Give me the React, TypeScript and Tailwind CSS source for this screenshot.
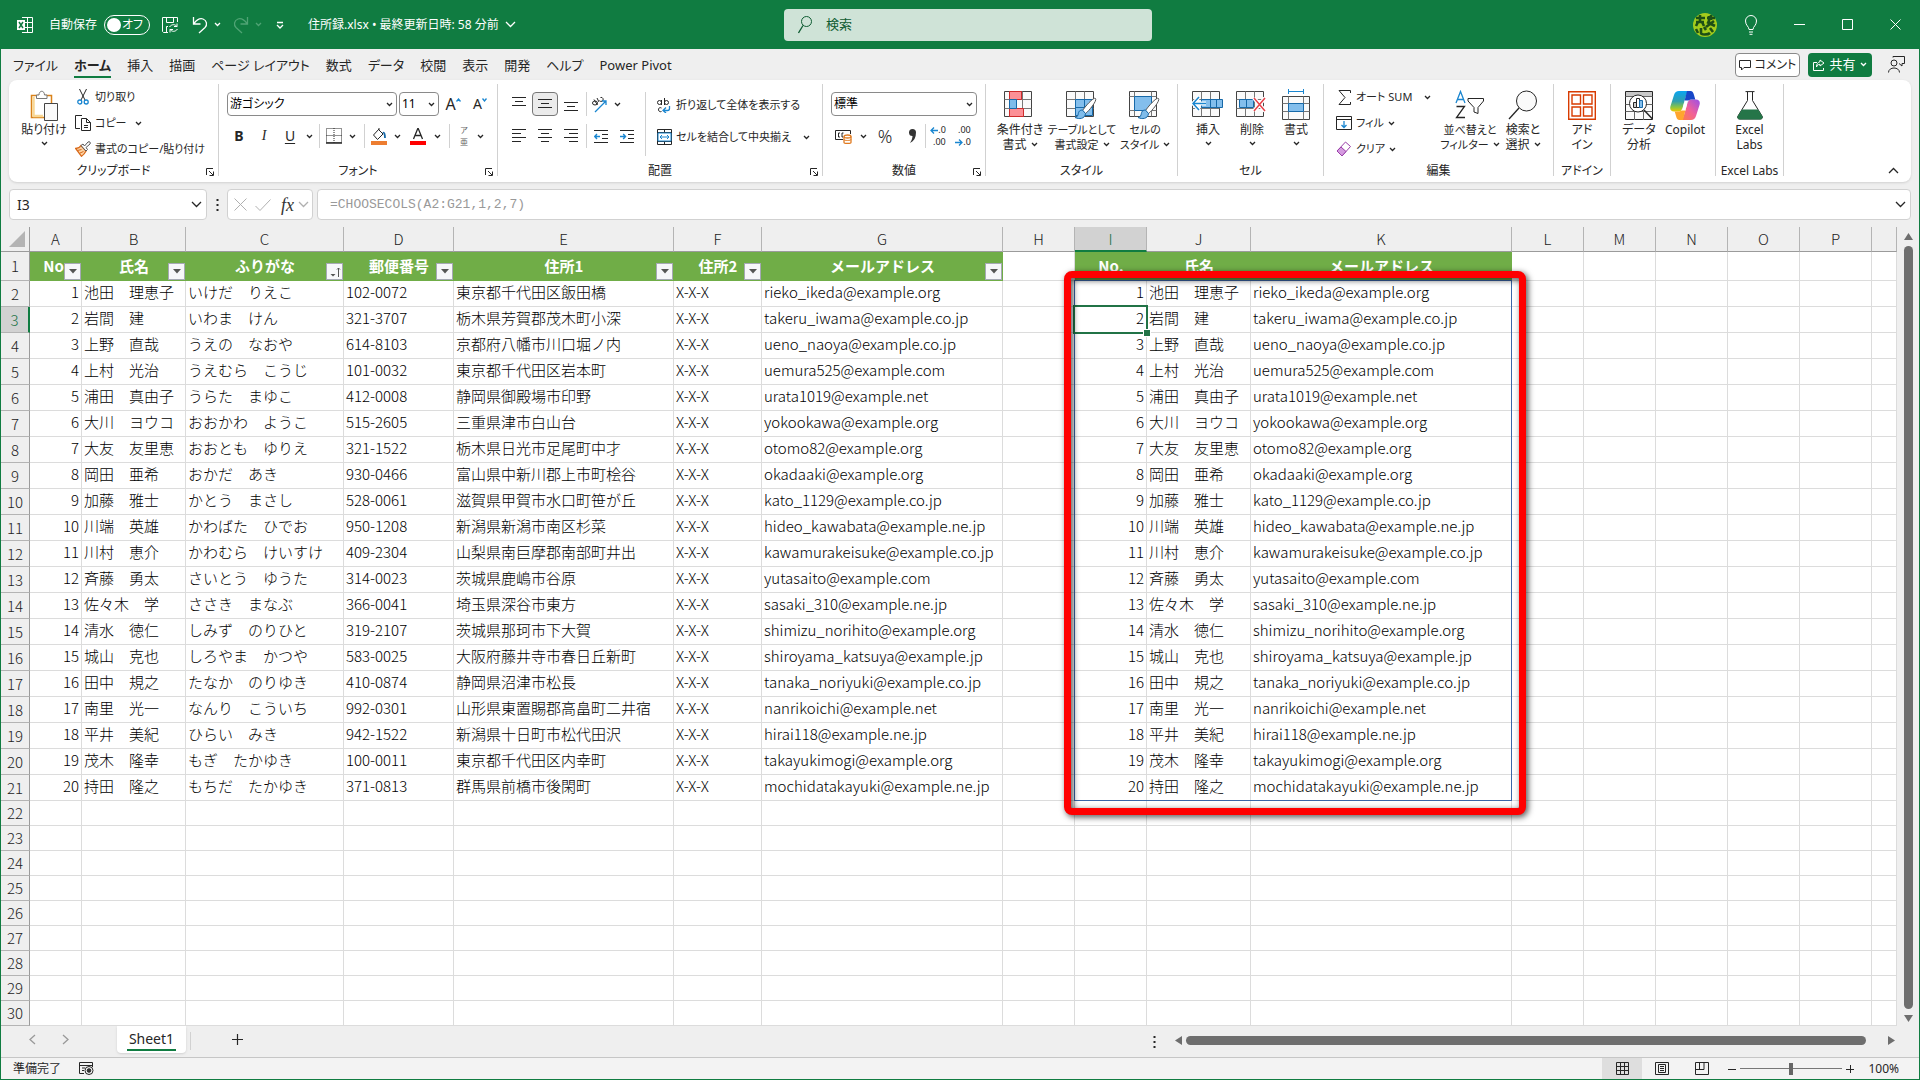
import { ReactNode } from "react";
import { clsx } from "clsx";

type Person = [string, string, string, string, string];

const people: Person[] = [
  ["池田　理恵子", "いけだ　りえこ", "102-0072", "東京都千代田区飯田橋", "rieko_ikeda@example.org"],
  ["岩間　建", "いわま　けん", "321-3707", "栃木県芳賀郡茂木町小深", "takeru_iwama@example.co.jp"],
  ["上野　直哉", "うえの　なおや", "614-8103", "京都府八幡市川口堀ノ内", "ueno_naoya@example.co.jp"],
  ["上村　光治", "うえむら　こうじ", "101-0032", "東京都千代田区岩本町", "uemura525@example.com"],
  ["浦田　真由子", "うらた　まゆこ", "412-0008", "静岡県御殿場市印野", "urata1019@example.net"],
  ["大川　ヨウコ", "おおかわ　ようこ", "515-2605", "三重県津市白山台", "yokookawa@example.org"],
  ["大友　友里恵", "おおとも　ゆりえ", "321-1522", "栃木県日光市足尾町中才", "otomo82@example.org"],
  ["岡田　亜希", "おかだ　あき", "930-0466", "富山県中新川郡上市町桧谷", "okadaaki@example.org"],
  ["加藤　雅士", "かとう　まさし", "528-0061", "滋賀県甲賀市水口町笹が丘", "kato_1129@example.co.jp"],
  ["川端　英雄", "かわばた　ひでお", "950-1208", "新潟県新潟市南区杉菜", "hideo_kawabata@example.ne.jp"],
  ["川村　恵介", "かわむら　けいすけ", "409-2304", "山梨県南巨摩郡南部町井出", "kawamurakeisuke@example.co.jp"],
  ["斉藤　勇太", "さいとう　ゆうた", "314-0023", "茨城県鹿嶋市谷原", "yutasaito@example.com"],
  ["佐々木　学", "ささき　まなぶ", "366-0041", "埼玉県深谷市東方", "sasaki_310@example.ne.jp"],
  ["清水　徳仁", "しみず　のりひと", "319-2107", "茨城県那珂市下大賀", "shimizu_norihito@example.org"],
  ["城山　克也", "しろやま　かつや", "583-0025", "大阪府藤井寺市春日丘新町", "shiroyama_katsuya@example.jp"],
  ["田中　規之", "たなか　のりゆき", "410-0874", "静岡県沼津市松長", "tanaka_noriyuki@example.co.jp"],
  ["南里　光一", "なんり　こういち", "992-0301", "山形県東置賜郡高畠町二井宿", "nanrikoichi@example.net"],
  ["平井　美紀", "ひらい　みき", "942-1522", "新潟県十日町市松代田沢", "hirai118@example.ne.jp"],
  ["茂木　隆幸", "もぎ　たかゆき", "100-0011", "東京都千代田区内幸町", "takayukimogi@example.org"],
  ["持田　隆之", "もちだ　たかゆき", "371-0813", "群馬県前橋市後閑町", "mochidatakayuki@example.ne.jp"],
];

const columns = [
  { id: "A", width: "w-[52px]", title: "No." },
  { id: "B", width: "w-[104px]", title: "氏名" },
  { id: "C", width: "w-[158px]", title: "ふりがな" },
  { id: "D", width: "w-[110px]", title: "郵便番号" },
  { id: "E", width: "w-[220px]", title: "住所1" },
  { id: "F", width: "w-[88px]", title: "住所2" },
  { id: "G", width: "w-[241px]", title: "メールアドレス" },
  { id: "H", width: "w-[72px]" },
  { id: "I", width: "w-[72px]", title: "No." },
  { id: "J", width: "w-[104px]", title: "氏名" },
  { id: "K", width: "w-[261px]", title: "メールアドレス" },
  { id: "L", width: "w-[72px]" },
  { id: "M", width: "w-[72px]" },
  { id: "N", width: "w-[72px]" },
  { id: "O", width: "w-[72px]" },
  { id: "P", width: "w-[72px]" },
  { id: "", width: "w-auto" },
];

const tabs = [
  "ファイル",
  "ホーム",
  "挿入",
  "描画",
  "ページ レイアウト",
  "数式",
  "データ",
  "校閲",
  "表示",
  "開発",
  "ヘルプ",
  "Power Pivot",
];

function Svg({
  w,
  h,
  children,
  className,
}: {
  w: number;
  h: number;
  children: ReactNode;
  className?: string;
}) {
  return (
    <svg
      width={w}
      height={h}
      viewBox={`0 0 ${w} ${h}`}
      fill="none"
      stroke="currentColor"
      className={clsx("shrink-0", className)}
      aria-hidden="true"
    >
      {children}
    </svg>
  );
}

function Chevron({ className }: { className?: string }) {
  return (
    <Svg w={7} h={5} className={className}>
      <path d="M1 1l2.5 2.5L6 1" strokeWidth="1.3" />
    </Svg>
  );
}

function BigChevron({ className }: { className?: string }) {
  return (
    <Svg w={11} h={7} className={className}>
      <path d="M1 1l4.5 4.5L10 1" strokeWidth="1.3" />
    </Svg>
  );
}

/* ---------- Ribbon building blocks ---------- */

function Group({
  label,
  width,
  launcher,
  children,
}: {
  label?: string;
  width: string;
  launcher?: boolean;
  children: ReactNode;
}) {
  return (
    <section
      className={clsx(
        "relative flex shrink-0 flex-col border-r border-[#d1d1d1]",
        width
      )}
    >
      <div className="flex h-[79px] shrink-0 items-start">{children}</div>
      <div className="text-center leading-4 whitespace-nowrap">{label}</div>
      {launcher && (
        <button
          aria-label={`${label}の設定`}
          className="absolute right-1 bottom-0"
        >
          <Svg w={8} h={8}>
            <path d="M7 .5H.5V7M3 3l4 4M7.5 3.5v4h-4" />
          </Svg>
        </button>
      )}
    </section>
  );
}

function Divider({ className }: { className?: string }) {
  return <span className={clsx("h-6 w-px shrink-0 bg-[#d1d1d1]", className)} />;
}

function Tool({
  label,
  width = "w-[26px]",
  active,
  children,
}: {
  label: string;
  width?: string;
  active?: boolean;
  children?: ReactNode;
}) {
  return (
    <button
      aria-label={label}
      className={clsx(
        "flex h-6 shrink-0 items-center justify-center rounded",
        width,
        active && "border border-[#777] bg-[#ebebeb]"
      )}
    >
      {children ?? <Chevron />}
    </button>
  );
}

function BigButton({
  icon,
  lines,
  width,
  menu,
}: {
  icon: ReactNode;
  lines: string[];
  width: string;
  menu?: "inline" | "below";
}) {
  return (
    <button
      className={clsx(
        "flex shrink-0 flex-col items-center leading-[15px] whitespace-nowrap",
        width
      )}
    >
      <span className="mt-1 flex h-[34px] items-center">{icon}</span>
      {lines.map((line, i) => (
        <span key={line} className="flex items-center gap-1">
          {line}
          {menu === "inline" && i === lines.length - 1 && <Chevron />}
        </span>
      ))}
      {menu === "below" && <Chevron className="mt-1" />}
    </button>
  );
}

function SmallButton({
  icon,
  text,
  menu,
}: {
  icon: ReactNode;
  text: string;
  menu?: string;
}) {
  return (
    <button className="flex h-[26px] items-center gap-1 text-[11px] whitespace-nowrap">
      <span className="flex w-4 justify-center">{icon}</span>
      {text}
      {menu && <Chevron className={menu} />}
    </button>
  );
}

function Dropdown({
  label,
  value,
  width,
}: {
  label: string;
  value: string;
  width: string;
}) {
  return (
    <div className={clsx("relative shrink-0", width)}>
      <select
        aria-label={label}
        className="h-6 w-full appearance-none rounded border border-[#8a8a8a] bg-white pl-0.5 text-black"
      >
        <option>{value}</option>
      </select>
      <Chevron className="pointer-events-none absolute top-2.5 right-1" />
    </div>
  );
}

/* ---------- Icons ---------- */

function AlignIcon({ kind }: { kind: "left" | "center" | "right" | "top" | "middle" | "bottom" }) {
  const paths = {
    left: "M0 .5h14M0 4.5h9M0 8.5h14M0 12.5h9",
    center: "M0 .5h14M3 4.5h8M0 8.5h14M3 12.5h8",
    right: "M0 .5h14M5 4.5h9M0 8.5h14M5 12.5h9",
    top: "M0 .5h14M3 4.5h8M0 8.5h14",
    middle: "M0 2.5h14M3 6.5h8M0 10.5h14",
    bottom: "M0 6.5h14M3 10.5h8M0 14.5h14",
  };
  return (
    <Svg w={14} h={kind === "bottom" ? 16 : 14}>
      <path d={paths[kind]} />
    </Svg>
  );
}

function IndentIcon({ out }: { out?: boolean }) {
  return (
    <Svg w={14} h={13}>
      <path d="M0 .5h14M8 4.5h6M8 8.5h6M0 12.5h14" />
      <path
        stroke="#1a86d0"
        strokeWidth="1.4"
        d={out ? "M6 6.5H.8M3 4L.8 6.5 3 9" : "M0 6.5h5.5M3.2 4l2.3 2.5L3.2 9"}
      />
    </Svg>
  );
}

function PasteIcon() {
  return (
    <Svg w={28} h={31}>
      <path d="M1.5 5.5h20v22h-20z" fill="#fff" stroke="#d9821a" strokeWidth="1.5" />
      <path d="M3.5 7v19M3 26h10" stroke="#f8d795" strokeWidth="2.5" />
      <path d="M6.5 8.5V5H9c0-5 5.5-5 5.5 0H17v3.5z" fill="#fff" stroke="#777" />
      <path d="M14.5 13.5h13v17h-13z" fill="#fafafa" stroke="#444" />
    </Svg>
  );
}

function ScissorsIcon() {
  return (
    <Svg w={12} h={16}>
      <path d="M2.5 0l5.5 11M9.5 0L4 11" />
      <circle cx="2.8" cy="13" r="2" stroke="#1a86d0" strokeWidth="1.3" />
      <circle cx="9.2" cy="13" r="2" stroke="#1a86d0" strokeWidth="1.3" />
    </Svg>
  );
}

function CopyIcon() {
  return (
    <Svg w={16} h={16}>
      <path d="M5 13.5H.5V.5H7" />
      <path d="M6.5 3.5h5l4 4v8h-9zM11.5 3.5v4h4M9 10.5h4M9 12.5h4" />
    </Svg>
  );
}

function BrushIcon() {
  return (
    <Svg w={16} h={16}>
      <path d="M.7 7.5c2 0 4-1 5.3-3l5 5.5c-1 2-2.5 4-4.5 5.3z" fill="#fbd3a5" stroke="#d9691a" strokeWidth="1.3" />
      <path d="M2.5 9.5l4-1M5 12l3.5-1.5" stroke="#d9691a" />
      <path d="M6 4.5L11 10l1.5-1.5L11 6.5l4-3.5c1-1.5-.5-3-2-2L9.5 5 8 3z" fill="#fff" stroke="#555" />
    </Svg>
  );
}

function Grid3({ children }: { children?: ReactNode }) {
  return (
    <Svg w={32} h={30}>
      <path d="M.5 1.5h27v25H.5z" fill="#fafafa" stroke="#444" />
      <path d="M.5 9.5h27M.5 18.5h27M9.5 1.5v25M18.5 1.5v25" stroke="#777" />
      {children}
    </Svg>
  );
}

function BrushOverlay() {
  return (
    <>
      <path d="M29.5 8.5c2 2-7 13-10 15l-3-3c2-3 11-14 13-12z" fill="#fff" stroke="#555" />
      <path d="M16.5 20c-4 0-4 3-4.5 5s-3 2.5-3 2.5c4 2 10 1.5 10.5-4z" fill="#7fbcea" stroke="#1769a8" />
    </>
  );
}

function ConditionalIcon() {
  return (
    <Grid3>
      <path d="M5.5 1.5h12v8h-12zM5.5 18.5h14v8h-14z" fill="#fc9096" stroke="#cf2b2b" />
      <path d="M5.5 9.5h7v9h-7z" fill="#7fbcea" stroke="#1769a8" />
    </Grid3>
  );
}

function TableFormatIcon() {
  return (
    <Grid3>
      <path d="M9.5 9.5h17v16h-17z" fill="#83beec" stroke="#1769a8" />
      <path d="M9.5 17.5h17M18.5 9.5v16" stroke="#1769a8" />
      <BrushOverlay />
    </Grid3>
  );
}

function CellStyleIcon() {
  return (
    <Svg w={32} h={30}>
      <path d="M.5 1.5h27v25H.5z" fill="#fafafa" stroke="#444" />
      <path d="M.5 6.5h27M.5 20.5h27M5.5 1.5v25M22.5 1.5v25" stroke="#777" />
      <path d="M5.5 6.5h17v14h-17z" fill="#83beec" stroke="#1769a8" />
      <BrushOverlay />
    </Svg>
  );
}

function InsertIcon() {
  return (
    <Grid3>
      <path d="M9.5 9.5h21v8h-21z" fill="#83beec" stroke="#1769a8" />
      <path d="M18.5 9.5v8M24.5 9.5v8" stroke="#1769a8" />
      <path d="M14 13.5H1M7 7l-6 6.5L7 20" stroke="#fff" strokeWidth="4" />
      <path d="M14 13.5H1M7 7l-6 6.5L7 20" stroke="#1a86d0" strokeWidth="1.5" />
    </Grid3>
  );
}

function DeleteIcon() {
  return (
    <Grid3>
      <path d="M3.5 9.5h14v8h-14z" fill="#83beec" stroke="#1769a8" />
      <path d="M10.5 9.5v8" stroke="#1769a8" />
      <path d="M18 8l11 13M29 8L18 21" stroke="#fff" strokeWidth="4" />
      <path d="M18 8l11 13M29 8L18 21" stroke="#e8424a" strokeWidth="1.5" />
    </Grid3>
  );
}

function FormatIcon() {
  return (
    <Svg w={28} h={32}>
      <path d="M6.5 2.5h15M6.5 0v5M21.5 0v5" stroke="#1a86d0" />
      <path d="M.5 7.5h27v23H.5z" fill="#fafafa" stroke="#444" />
      <path d="M.5 14.5h27M.5 22.5h27M6.5 7.5v23M21.5 7.5v23" stroke="#777" />
      <path d="M6.5 14.5h15v8h-15z" fill="#83beec" stroke="#1769a8" />
    </Svg>
  );
}

function SortFilterIcon() {
  return (
    <Svg w={30} h={30}>
      <path d="M1 13L5.5 1.5 10 13M2.5 9.5h6" stroke="#1a86d0" strokeWidth="1.3" />
      <path d="M1.5 16.5h8l-8 11H10" strokeWidth="1.3" />
      <path d="M13 8.5h15.5V11L23 17.5v6L19 22v-4.5L13 11z" />
    </Svg>
  );
}

function FindIcon() {
  return (
    <Svg w={30} h={30}>
      <circle cx="18.5" cy="11" r="10" fill="#fafafa" />
      <path d="M11 18L1 29" strokeWidth="1.3" />
    </Svg>
  );
}

function AddinIcon() {
  return (
    <Svg w={28} h={29}>
      <path
        d="M.7.7h26.6v27.6H.7zM4 4h8.500v9H4zM15.500 4H24v9h-8.500zM4 16h8.500v9H4zM15.500 16H24v9h-8.500z"
        stroke="#d83b01"
        strokeWidth="1.4"
      />
    </Svg>
  );
}

function AnalyzeIcon() {
  return (
    <Svg w={28} h={29}>
      <path d="M.5.5h27v28H.5z" fill="#fafafa" />
      <path d="M1 1h26v4H1z" fill="#c8c8c8" stroke="none" />
      <path d="M.5 5.5h27M.5 13.5h27M.5 20.5h27M9.5 21v8M18.5 21v8" stroke="#666" />
      <circle cx="13" cy="12.5" r="8.5" fill="#fff" />
      <path d="M19 19l8.5 9" strokeWidth="1.5" />
      <path d="M8.5 11.5h3v5h-3z" fill="#ccc" />
      <path d="M11.5 7.5h3v9h-3z" fill="#fff" />
      <path d="M14.5 9.5h3v7h-3z" fill="#83beec" stroke="#1769a8" />
    </Svg>
  );
}

function CopilotIcon() {
  return (
    <svg width="30" height="29" viewBox="0 0 30 29" aria-hidden="true">
      <defs>
        <linearGradient id="cpLeft" x1="0" y1="0" x2="0" y2="1">
          <stop offset="0" stopColor="#0aa5f0" />
          <stop offset=".5" stopColor="#2f9fb0" />
          <stop offset=".8" stopColor="#8fc63f" />
          <stop offset="1" stopColor="#f0c800" />
        </linearGradient>
        <linearGradient id="cpRight" x1="1" y1="0" x2="0" y2="1">
          <stop offset="0" stopColor="#9a50e8" />
          <stop offset=".5" stopColor="#f0609a" />
          <stop offset="1" stopColor="#ff8040" />
        </linearGradient>
      </defs>
      <path d="M9 0h11c-2 0-3 2-4 5l-3.5 12c-.8 2.500-2 3.500-4 3.500H4c-3 0-4.500-2-3.500-5.500L4 4c.8-2.500 2.500-4 5-4z" fill="url(#cpLeft)" />
      <path d="M21 29H10c2 0 3-2 4-5l3.500-12c.8-2.500 2-3.500 4-3.500H26c3 0 4.500 2 3.500 5.500L26 25c-.8 2.500-2.500 4-5 4z" fill="url(#cpRight)" />
      <path d="M17 0h3.500c2 0 2.800 1.500 3.500 4l1.300 4.500h-4c-2 0-3 1-4 3L14 12z" fill="#1747c8" />
      <path d="M13 29H9.500c-2 0-2.800-1.500-3.500-4l-1.300-4.500h4c2 0 3-1 4-3L16 17z" fill="#ffa52e" />
      <path d="M14.500 9.500h4.500c-1 .6-1.500 1.500-2 3L15.500 19.500H11c1-.6 1.500-1.500 2-3z" fill="#fff" />
    </svg>
  );
}

function FlaskIcon() {
  return (
    <Svg w={26} h={29}>
      <path d="M10.5 1v8.500L1 25c-1 2 0 3 2 3h20c2 0 3-1 2-3L15.500 9.500V1" />
      <path d="M8.5.6h9" />
      <path d="M5 19h16l4 6.500c.5 1.500 0 2.500-2 2.500H3c-2 0-2.500-1-2-2.500z" fill="#257548" stroke="#257548" />
    </Svg>
  );
}

function UndoIcon({ flip }: { flip?: boolean }) {
  return (
    <Svg w={16} h={18} className={clsx(flip && "-scale-x-100")}>
      <path d="M1.5 1v7h7M2 7.5c3-4 6-5.500 9-4.500 4 1.500 4.500 6 2 8.500L7 17" strokeWidth="1.3" />
    </Svg>
  );
}

/* ---------- Page sections ---------- */

function TitleBar() {
  return (
    <header className="flex h-[49px] shrink-0 items-center bg-[#107c41] text-white">
      <div className="flex flex-1 items-center pl-4">
        <Svg w={16} h={16}>
          <path d="M5 .5h10.5v15H5M5 5.5h10M5 10.5h10M10.5 0v16" />
          <path d="M0 3h8v10H0z" fill="#fff" stroke="none" />
          <path d="M2 5l4 6M6 5l-4 6" stroke="#107c41" strokeWidth="1.5" />
        </Svg>
        <label className="ml-4 flex items-center gap-[7px] whitespace-nowrap">
          自動保存
          <span className="relative flex h-5 w-[46px] items-center justify-end rounded-full border border-white pr-1.5">
            <input type="checkbox" className="absolute inset-0 appearance-none" />
            <span className="absolute top-0.5 left-0.5 size-3.5 rounded-full bg-white" />
            オフ
          </span>
        </label>
        <button aria-label="保存" className="ml-3">
          <Svg w={16} h={16}>
            <path d="M6 15.5H1.5l-1-1V.5h15V5M4.5.5v5h7v-5M4.5 15V9.5H6" />
            <path d="M7.5 10c2-3 5.500-3 7.500-.5M15 6.5v3h-3M15.5 12c-2 3-5.500 3-7.500.5M8 15.5v-3h3" />
          </Svg>
        </button>
        <button aria-label="元に戻す" className="ml-3.5 flex items-center gap-1.5">
          <UndoIcon />
          <Chevron />
        </button>
        <button aria-label="やり直し" className="ml-3 flex items-center gap-1.5 text-[#4fa374]">
          <UndoIcon flip />
          <Chevron />
        </button>
        <button aria-label="クイック アクセス ツール バーのユーザー設定" className="ml-3.5">
          <Svg w={8} h={8}>
            <path d="M1 1.5h6M1 4l3 3 3-3" strokeWidth="1.3" />
          </Svg>
        </button>
        <button className="ml-6 flex items-center gap-1.5 whitespace-nowrap">
          住所録.xlsx • 最終更新日時: 58 分前
          <BigChevron />
        </button>
      </div>
      <label className="flex h-8 w-[368px] items-center rounded bg-[#cfe3d7] pl-3.5 text-[#0f5c32]">
        <Svg w={14} h={18}>
          <circle cx="8.5" cy="5.5" r="5" />
          <path d="M5 9.5L.5 17" strokeWidth="1.3" />
        </Svg>
        <input
          aria-label="検索"
          placeholder="検索"
          className="ml-3.5 w-full bg-transparent text-[13px] outline-none placeholder:text-[#0f5c32]"
        />
      </label>
      <div className="flex flex-1 items-center justify-end">
        <button aria-label="アカウント" className="mr-2.5">
          <svg width="24" height="24" viewBox="0 0 24 24" aria-hidden="true">
            <circle cx="12" cy="12" r="12" fill="#a4cc1c" />
            <path
              d="M3 5h9M7 2v7M3 9h8M5 9l-2 4M9 9l2 4M14 5h8M18 2v5M14 9l8 4M21 8l-8 6M16 3v8M3 16l2 4M8 15v5c0 2 7 2 9 0M11 14l2 3M17 15l3 4"
              stroke="#1d4f16"
              strokeWidth="2.6"
              fill="none"
            />
          </svg>
        </button>
        <button aria-label="ヒント" className="flex w-12 justify-center">
          <Svg w={12} h={20}>
            <path d="M4 14.5c0-3-3.5-4-3.5-8.500a5.500 5.500 0 0111 0c0 4.500-3.500 5.500-3.500 8.500zM4 17h4M4.500 19.300h3" />
          </Svg>
        </button>
        <button aria-label="最小化" className="flex w-12 justify-center">
          <Svg w={11} h={11}>
            <path d="M0 5.5h11" />
          </Svg>
        </button>
        <button aria-label="最大化" className="flex w-12 justify-center">
          <Svg w={11} h={11}>
            <path d="M.5.5h10v10H.5z" />
          </Svg>
        </button>
        <button aria-label="閉じる" className="flex w-12 justify-center">
          <Svg w={11} h={11}>
            <path d="M.5.5l10 10M10.5.5l-10 10" />
          </Svg>
        </button>
      </div>
    </header>
  );
}

function TabRow() {
  return (
    <div className="flex h-[31px] shrink-0 items-center pr-3.5 pl-1">
      <nav className="flex flex-1 pt-0.5">
        {tabs.map((tab) => (
          <button
            key={tab}
            className={clsx(
              "px-2 text-[13px] leading-[22px] whitespace-nowrap",
              tab === "ホーム" && "font-bold"
            )}
          >
            <span
              className={clsx(
                "block border-b-2",
                tab === "ホーム" ? "border-[#107c41]" : "border-transparent"
              )}
            >
              {tab}
            </span>
          </button>
        ))}
      </nav>
      <button className="mr-2 flex h-6 w-[65px] items-center justify-center gap-1 rounded border border-[#8a8a8a] bg-white whitespace-nowrap">
        <Svg w={12} h={12}>
          <path d="M.5 1.5h11v7H5L2.5 11V8.500h-2z" />
        </Svg>
        コメント
      </button>
      <button className="mr-4 flex h-6 w-16 items-center justify-center gap-1 rounded bg-[#107c41] text-[13px] text-white">
        <Svg w={12} h={12}>
          <path d="M4 3.5H.5v8h10V9M7 1l4 3-4 3V5.300C5 5.300 4 6.500 3.500 8 3.500 5 5 3 7 2.700z" />
        </Svg>
        共有
        <Chevron />
      </button>
      <button aria-label="フィードバック">
        <Svg w={17} h={17}>
          <circle cx="6" cy="7" r="3" />
          <path d="M.5 16.5c0-6 11-6 11 0M5 1.500V.5h11.500v7H14V10l-3-2.500" />
        </Svg>
      </button>
    </div>
  );
}

function Ribbon() {
  return (
    <div className="relative mx-2 flex h-[102px] shrink-0 overflow-hidden rounded-lg bg-white pt-1 pb-1.5 shadow">
      <Group label="クリップボード" width="w-[210px]" launcher>
        <BigButton icon={<PasteIcon />} lines={["貼り付け"]} width="w-[66px] pl-1" menu="below" />
        <div className="flex flex-col items-start">
          <SmallButton icon={<ScissorsIcon />} text="切り取り" />
          <SmallButton icon={<CopyIcon />} text="コピー" menu="ml-1" />
          <SmallButton icon={<BrushIcon />} text="書式のコピー/貼り付け" />
        </div>
      </Group>

      <Group label="フォント" width="w-[279px]" launcher>
        <div className="flex flex-col gap-2 pt-2 pl-2">
          <div className="flex items-center gap-0.5">
            <Dropdown label="フォント名" value="游ゴシック" width="w-[170px]" />
            <Dropdown label="サイズ" value="11" width="w-10" />
            <Tool label="フォント サイズの拡大" width="w-6">
              <span className="text-base">A</span>
              <Svg w={5} h={4} className="mb-2">
                <path d="M.5 3.5L2.500 1l2 2.500" stroke="#1a86d0" strokeWidth="1.3" />
              </Svg>
            </Tool>
            <Tool label="フォント サイズの縮小">
              <span className="text-sm">A</span>
              <Svg w={5} h={4} className="mb-2">
                <path d="M.5.5L2.500 3l2-2.500" stroke="#1a86d0" strokeWidth="1.3" />
              </Svg>
            </Tool>
          </div>
          <div className="flex items-center">
            <Tool label="太字" width="w-6">
              <b className="text-sm">B</b>
            </Tool>
            <Tool label="斜体">
              <i className="font-['Liberation_Serif',serif] text-sm">I</i>
            </Tool>
            <Tool label="下線">
              <u className="text-sm underline-offset-2">U</u>
            </Tool>
            <Tool label="下線の種類" width="w-3" />
            <Divider className="mx-1" />
            <Tool label="罫線" width="w-5">
              <Svg w={16} h={16}>
                <path d="M.5.5h15v14H.5zM.5 7.5h15M8 0v15" strokeDasharray="1 1" />
                <path d="M0 15h16" strokeWidth="1.5" />
              </Svg>
            </Tool>
            <Tool label="罫線の種類" width="w-4" />
            <Divider className="mx-1" />
            <Tool label="塗りつぶしの色" width="w-5">
              <Svg w={16} h={17}>
                <path d="M8 1L2.5 7l4 4.500L12 6 8 2V0" />
                <path d="M12 5c1-1 2 1 2 5" stroke="#1769a8" strokeWidth="1.8" />
                <path d="M0 13h16v4H0z" fill="#ed7d31" stroke="none" />
              </Svg>
            </Tool>
            <Tool label="塗りつぶしの色の選択" width="w-4" />
            <Tool label="フォントの色">
              <Svg w={16} h={17}>
                <path d="M3.5 11L8 0l4.500 11M5 7.500h6" strokeWidth="1.3" />
                <path d="M0 13h16v4H0z" fill="#f00" stroke="none" />
              </Svg>
            </Tool>
            <Tool label="フォントの色の選択" width="w-3" />
            <Divider className="mx-1.5" />
            <Tool label="ふりがなの表示" width="w-4">
              <span className="flex flex-col text-[8px] leading-3 text-[#666]">
                <span>ア</span>
                <span>亜</span>
              </span>
            </Tool>
            <Tool label="ふりがなの設定" width="w-4" />
          </div>
        </div>
      </Group>

      <Group label="配置" width="w-[325px]" launcher>
        <div className="flex flex-col gap-2 pt-2 pl-2">
          <div className="flex items-center">
            <Tool label="上揃え">
              <AlignIcon kind="top" />
            </Tool>
            <Tool label="上下中央揃え" active>
              <AlignIcon kind="middle" />
            </Tool>
            <Tool label="下揃え">
              <AlignIcon kind="bottom" />
            </Tool>
            <Divider className="mx-0.5" />
            <Tool label="方向" width="w-5">
              <Svg w={17} h={17}>
                <ellipse cx="4" cy="7" rx="2.5" ry="2" />
                <path d="M6.5 9L3 3.500M8 6L6 2M8.500 4.500a2 2 0 101-3" />
                <path d="M4 16L15 5M11 5h4v4" stroke="#1a86d0" strokeWidth="1.3" />
              </Svg>
            </Tool>
            <Tool label="方向の種類" width="w-4" />
          </div>
          <div className="flex items-center">
            <Tool label="左揃え">
              <AlignIcon kind="left" />
            </Tool>
            <Tool label="中央揃え">
              <AlignIcon kind="center" />
            </Tool>
            <Tool label="右揃え">
              <AlignIcon kind="right" />
            </Tool>
            <Divider className="mx-0.5" />
            <Tool label="インデントを減らす" width="w-6">
              <IndentIcon out />
            </Tool>
            <Tool label="インデントを増やす" width="w-7">
              <IndentIcon />
            </Tool>
          </div>
        </div>
        <Divider className="mt-2 ml-1 h-16 self-start" />
        <div className="flex flex-col items-start gap-1.5 pt-2 pl-2.5">
          <SmallButton
            icon={
              <Svg w={14} h={15}>
                <circle cx="2.5" cy="4.5" r="2" />
                <path d="M4.5 2v5M7.500 0v7" />
                <circle cx="9.5" cy="4.5" r="2" />
                <path d="M4.5 10c-4-2-4 5 0 3.500" />
                <path d="M12.5 8v2.500c0 1.500-1 2-2 2h-4M9 9.500l-3 3L9 15" stroke="#1a86d0" strokeWidth="1.3" />
              </Svg>
            }
            text="折り返して全体を表示する"
          />
          <SmallButton
            icon={
              <Svg w={15} h={16}>
                <path d="M.5.5h14v15H.5zM.5 3.5h14M.5 12.5h14M7.5 0v4M7.5 12v4" />
                <path d="M1 4h13v8H1z" fill="#fff" stroke="#1a86d0" />
                <path d="M3 8h9M5 6L3 8l2 2M10 6l2 2-2 2" stroke="#1a86d0" />
              </Svg>
            }
            text="セルを結合して中央揃え"
            menu="ml-2"
          />
        </div>
      </Group>

      <Group label="数値" width="w-[163px]" launcher>
        <div className="flex flex-col gap-2 pt-2 pl-2">
          <Dropdown label="表示形式" value="標準" width="w-[146px]" />
          <div className="flex items-center">
            <Tool label="通貨表示形式" width="w-6">
              <Svg w={17} h={16}>
                <path d="M8 11.5H.5v-9h15V6M5 5H3.500v4H5M8.500 5H7v4h1" />
                <path d="M9 8.5v6c0 1.300 7 1.300 7 0v-6" fill="#fff" stroke="#e07a1f" strokeWidth="1.3" />
                <ellipse cx="12.5" cy="8.5" rx="3.5" ry="1.5" fill="#fff" stroke="#e07a1f" strokeWidth="1.3" />
                <path d="M9 11.5c0 1.300 7 1.300 7 0" stroke="#e07a1f" />
              </Svg>
            </Tool>
            <Tool label="通貨の種類" width="w-4" />
            <Tool label="パーセント スタイル" width="w-7">
              <span className="text-lg font-light">%</span>
            </Tool>
            <Tool label="桁区切りスタイル">
              <Svg w={9} h={16}>
                <path d="M1 4.5a3.500 3.500 0 117 0C8 9.500 6 13 2 15c1-2 2.500-4 2.500-7A3.500 3.500 0 011 4.500z" fill="#333" stroke="none" />
              </Svg>
            </Tool>
            <Divider />
            <Tool label="小数点以下の表示桁数を増やす" width="w-6">
              <span className="flex flex-col items-end text-[9px] leading-3">
                <span className="flex items-center">
                  <Svg w={8} h={7}>
                    <path d="M8 3.5H1M4 .5l-3 3 3 3" stroke="#1a86d0" strokeWidth="1.3" />
                  </Svg>
                  .0
                </span>
                <span>.00</span>
              </span>
            </Tool>
            <Tool label="小数点以下の表示桁数を減らす">
              <span className="flex flex-col items-end text-[9px] leading-3">
                <span>.00</span>
                <span className="flex items-center">
                  <Svg w={8} h={7}>
                    <path d="M0 3.5h7M4 .5l3 3-3 3" stroke="#1a86d0" strokeWidth="1.3" />
                  </Svg>
                  .0
                </span>
              </span>
            </Tool>
          </div>
        </div>
      </Group>

      <Group label="スタイル" width="w-[192px]">
        <BigButton
          icon={<ConditionalIcon />}
          lines={["条件付き", "書式"]}
          width="w-[66px] pl-0.5"
          menu="inline"
        />
        <BigButton
          icon={<TableFormatIcon />}
          lines={["テーブルとして", "書式設定"]}
          width="w-[60px] text-[11px]"
          menu="inline"
        />
        <BigButton
          icon={<CellStyleIcon />}
          lines={["セルの", "スタイル"]}
          width="w-[66px] text-[11px]"
          menu="inline"
        />
      </Group>

      <Group label="セル" width="w-[146px]">
        <div className="flex pl-2">
          <BigButton icon={<InsertIcon />} lines={["挿入"]} width="w-11" menu="below" />
          <BigButton icon={<DeleteIcon />} lines={["削除"]} width="w-11" menu="below" />
          <BigButton icon={<FormatIcon />} lines={["書式"]} width="w-11" menu="below" />
        </div>
      </Group>

      <Group label="編集" width="w-[230px]">
        <div className="flex w-[120px] flex-col items-start pl-3">
          <SmallButton
            icon={
              <Svg w={13} h={15}>
                <path d="M12.5 3V.5H1l6 7-6 7h11.500V12" />
              </Svg>
            }
            text="オート SUM"
            menu="ml-2"
          />
          <SmallButton
            icon={
              <Svg w={16} h={14}>
                <path d="M.5.5h15v13H.5zM.5 3.5h15" />
                <path d="M8 5v6.500M5.500 9L8 11.500 10.500 9" stroke="#1a86d0" strokeWidth="1.3" />
              </Svg>
            }
            text="フィル"
          menu="ml-0"
          />
          <SmallButton
            icon={
              <Svg w={16} h={16}>
                <path d="M9.5 1l5 4.500L6 15l-5-5z" fill="#fff" stroke="#9a3fa8" />
                <path d="M5 6l5 4.500L6 15l-5-5z" fill="#d59be0" stroke="#9a3fa8" />
              </Svg>
            }
            text="クリア"
            menu="ml-0"
          />
        </div>
        <BigButton
          icon={<SortFilterIcon />}
          lines={["並べ替えと", "フィルター"]}
          width="w-[52px] text-[11px]"
          menu="inline"
        />
        <BigButton icon={<FindIcon />} lines={["検索と", "選択"]} width="w-[54px]" menu="inline" />
      </Group>

      <Group label="アドイン" width="w-[57px]">
        <BigButton icon={<AddinIcon />} lines={["アド", "イン"]} width="w-full" />
      </Group>

      <Group width="w-[105px]">
        <div className="flex pl-1">
          <BigButton icon={<AnalyzeIcon />} lines={["データ", "分析"]} width="w-12" />
          <BigButton icon={<CopilotIcon />} lines={["Copilot"]} width="w-11" />
        </div>
      </Group>

      <Group label="Excel Labs" width="w-[68px]">
        <BigButton icon={<FlaskIcon />} lines={["Excel", "Labs"]} width="w-full" />
      </Group>

      <button aria-label="リボンを折りたたむ" className="absolute right-3 bottom-2">
        <BigChevron className="rotate-180" />
      </button>
    </div>
  );
}

function FormulaBar() {
  return (
    <div className="mx-2 mt-[7px] flex h-[31px] shrink-0">
      <div className="flex w-[198px] items-center rounded border border-[#d1d1d1] bg-white pr-1 pl-[7px]">
        <input
          aria-label="名前ボックス"
          defaultValue="I3"
          className="w-full min-w-0 bg-transparent text-sm outline-none"
        />
        <BigChevron />
      </div>
      <div className="flex w-5 items-center justify-center">
        <Svg w={3} h={12}>
          <path d="M1.5 0v12" strokeWidth="2" strokeDasharray="2 3" />
        </Svg>
      </div>
      <div className="flex w-[86px] items-center rounded border border-[#d1d1d1] bg-white pr-0.5 pl-1.5 text-[#b0b0b0]">
        <button aria-label="キャンセル">
          <Svg w={13} h={13}>
            <path d="M.5.5l12 12M12.5.5l-12 12" />
          </Svg>
        </button>
        <button aria-label="入力" className="ml-2">
          <Svg w={16} h={12}>
            <path d="M.5 7L5 11.500 15.500.5" />
          </Svg>
        </button>
        <button
          aria-label="関数の挿入"
          className="mr-1 ml-2.5 font-['Liberation_Serif',serif] text-lg leading-5 text-[#333] italic"
        >
          fx
        </button>
        <BigChevron />
      </div>
      <div className="ml-1 flex flex-1 items-center rounded border border-[#d1d1d1] bg-white pr-1 pl-3">
        <input
          aria-label="数式バー"
          defaultValue="=CHOOSECOLS(A2:G21,1,2,7)"
          className="w-full bg-transparent font-['Liberation_Mono',monospace] text-[13px] text-[#999] outline-none"
        />
        <BigChevron />
      </div>
    </div>
  );
}

function FilterButton({ sorted }: { sorted?: boolean }) {
  return (
    <button
      aria-label="フィルター"
      className="absolute right-px bottom-px flex h-[17px] w-[17px] items-center justify-center border border-[#a6a9b5] bg-[#f7f7fa] text-[#555]"
    >
      {sorted ? (
        <Svg w={13} h={13}>
          <path d="M2.5 9h5L5 11.500z" fill="#555" stroke="none" />
          <path d="M10.5 12V3M9 4.500L10.500 3 12 4.500" />
        </Svg>
      ) : (
        <Svg w={8} h={5}>
          <path d="M0 0h8L4 4.500z" fill="#555" stroke="none" />
        </Svg>
      )}
    </button>
  );
}

function cellText(col: string, row: number) {
  const p = people[row - 2];
  if (!p) return null;
  const values: Record<string, string | number> = {
    A: row - 1,
    B: p[0],
    C: p[1],
    D: p[2],
    E: p[3],
    F: "X-X-X",
    G: p[4],
    I: row - 1,
    J: p[0],
    K: p[4],
  };
  return values[col];
}

function Sheet() {
  const rows = Array.from({ length: 30 }, (_, i) => i + 1);

  return (
    <div className="relative min-w-0 flex-1">
      <table className="w-full table-fixed border-separate border-spacing-0 bg-white text-[15px] leading-5 font-light whitespace-nowrap text-black">
        <colgroup>
          <col className="w-[29px]" />
          {columns.map((c) => (
            <col key={c.id} className={c.width} />
          ))}
        </colgroup>
        <thead>
          <tr className="h-[25px] bg-[#efefef] text-[#222]">
            <th className="border-r border-b border-[#9b9b9b] p-0">
              <Svg w={16} h={16} className="ml-2">
                <path d="M16 0v16H0z" fill="#b4b4b4" stroke="none" />
              </Svg>
            </th>
            {columns.map((c) => (
              <th
                key={c.id}
                className={clsx(
                  "border-r p-0 font-light",
                  c.id === "I"
                    ? "border-b-2 border-r-[#b4b4b4] border-b-[#107c41] bg-[#d2d2d2] text-[#217346]"
                    : "border-b border-r-[#b4b4b4] border-b-[#9b9b9b]"
                )}
              >
                {c.id}
              </th>
            ))}
          </tr>
        </thead>
        <tbody>
          {rows.map((row) => (
            <tr
              key={row}
              className={clsx(
                row === 1 ? "h-[29px]" : row <= 21 ? "h-[26px]" : "h-[25px]"
              )}
            >
              <th
                className={clsx(
                  "border-b p-0 font-light",
                  row === 3
                    ? "border-r-2 border-r-[#107c41] border-b-[#b4b4b4] bg-[#d2d2d2] text-[#217346]"
                    : "border-r border-r-[#9b9b9b] border-b-[#b4b4b4] bg-[#efefef] text-[#222]"
                )}
              >
                {row}
              </th>
              {columns.map((c) =>
                row === 1 && c.title ? (
                  <td key={c.id} className="relative bg-[#70ad47] p-0 pb-0.5 text-center font-bold text-white">
                    {c.title}
                    {c.id < "H" && <FilterButton sorted={c.id === "C"} />}
                  </td>
                ) : (
                  <td
                    key={c.id}
                    className={clsx(
                      "relative border-r border-b border-[#dcdcdc] px-0.5 pt-0 pb-1",
                      (c.id === "A" || c.id === "I") && "text-right"
                    )}
                  >
                    {cellText(c.id, row)}
                    {c.id === "I" && row === 3 && (
                      <span className="absolute -inset-0.5 z-20 border-2 border-[#217346]">
                        <span className="absolute -right-1 -bottom-1 size-1.5 bg-[#217346] outline outline-white" />
                      </span>
                    )}
                  </td>
                )
              )}
            </tr>
          ))}
        </tbody>
      </table>

      {/* spill range and callout frame drawn over the cells */}
      <div className="pointer-events-none absolute top-[53px] left-[1073px] z-10 h-[521px] w-[438px] border border-[#3a66a8]" />
      <div className="pointer-events-none absolute top-[44px] left-[1063px] z-30 h-[544px] w-[462px] rounded-lg border-[7px] border-[#f00] drop-shadow-[2px_2px_3px_rgba(0,0,0,0.7)]" />
    </div>
  );
}

function VerticalScroll() {
  return (
    <div className="flex w-[22px] shrink-0 flex-col items-center gap-1.5 py-1 pt-1.5 text-[#6e6e6e]">
      <Svg w={9} h={7}>
        <path d="M4.5 0L9 7H0z" fill="currentColor" stroke="none" />
      </Svg>
      <div className="w-[9px] flex-1 rounded-full bg-[#6e6e6e]" />
      <Svg w={9} h={7}>
        <path d="M4.5 7L9 0H0z" fill="currentColor" stroke="none" />
      </Svg>
    </div>
  );
}

function SheetTabs() {
  return (
    <div className="flex h-[31px] shrink-0 items-start">
      <div className="flex w-[116px] items-center justify-center gap-[26px] pt-2 pr-5 text-[#999]">
        <button aria-label="前のシート">
          <Svg w={7} h={11}>
            <path d="M6 1L1 5.500 6 10" strokeWidth="1.3" />
          </Svg>
        </button>
        <button aria-label="次のシート">
          <Svg w={7} h={11}>
            <path d="M1 1l5 4.500L1 10" strokeWidth="1.3" />
          </Svg>
        </button>
      </div>
      <button className="flex h-[27px] w-[69px] justify-center rounded-b bg-white pt-1 shadow-sm">
        <span className="h-[21px] border-b-2 border-[#107c41] px-0.5 text-sm leading-[18px]">
          Sheet1
        </span>
      </button>
      <Divider className="mt-1.5 ml-1 h-[18px]" />
      <button aria-label="新しいシート" className="mt-2 ml-[41px]">
        <Svg w={11} h={11}>
          <path d="M5.5 0v11M0 5.500h11" strokeWidth="1.2" />
        </Svg>
      </button>
      <span className="flex-1" />
      <Svg w={3} h={12} className="mt-2.5">
        <path d="M1.5 0v12" strokeWidth="2" strokeDasharray="2 3" />
      </Svg>
      <div className="mt-1.5 mr-6 ml-[19px] flex w-[720px] items-center text-[#6e6e6e]">
        <Svg w={7} h={9}>
          <path d="M0 4.5L7 0v9z" fill="currentColor" stroke="none" />
        </Svg>
        <div className="my-1 mr-[22px] ml-1 h-[9px] flex-1 rounded-full bg-[#6e6e6e]" />
        <Svg w={7} h={9}>
          <path d="M7 4.5L0 0v9z" fill="currentColor" stroke="none" />
        </Svg>
      </div>
    </div>
  );
}

function StatusBar() {
  return (
    <footer className="flex h-[22px] shrink-0 items-stretch border-t border-[#c6c6c6] bg-[#f3f3f3] pl-3">
      <div className="flex flex-1 items-center gap-[18px]">
        準備完了
        <Svg w={15} h={13}>
          <path d="M5 11.5H.5V.5h13V5M.5 3.5h13M3 6h3M3 8.5h2" />
          <circle cx="10" cy="8.5" r="4" fill="#f3f3f3" />
          <circle cx="10" cy="8.5" r="1.8" fill="#333" />
        </Svg>
      </div>
      <button aria-label="標準" className="flex w-10 items-center justify-center bg-[#dedede]">
        <Svg w={13} h={13}>
          <path d="M.5.5h12v12H.5zM.5 4.5h12M.5 8.5h12M4.5 0v13M8.5 0v13" />
        </Svg>
      </button>
      <button aria-label="ページ レイアウト" className="flex w-10 items-center justify-center">
        <Svg w={14} h={13}>
          <path d="M.5.5h13v12H.5zM3.5 2.5h7v8h-7zM5 4.5h4M5 6.5h4M5 8.5h4" />
        </Svg>
      </button>
      <button aria-label="改ページ プレビュー" className="flex w-10 items-center justify-center">
        <Svg w={14} h={13}>
          <path d="M.5.5h13v12H.5zM4.5.5v7M.5 7.5H9v-7" />
        </Svg>
      </button>
      <div className="flex items-center gap-1 pl-1.5">
        <button aria-label="縮小" className="w-2">
          <Svg w={8} h={8}>
            <path d="M0 4.5h8" />
          </Svg>
        </button>
        <input
          type="range"
          aria-label="ズーム"
          defaultValue={50}
          className="h-3 w-[102px] appearance-none bg-[linear-gradient(#777,#777)] bg-[length:100%_1px] bg-center bg-no-repeat [&::-webkit-slider-thumb]:h-3 [&::-webkit-slider-thumb]:w-1 [&::-webkit-slider-thumb]:appearance-none [&::-webkit-slider-thumb]:bg-[#666]"
        />
        <button aria-label="拡大" className="w-2">
          <Svg w={8} h={8}>
            <path d="M0 4.5h8M4.500 0v8" />
          </Svg>
        </button>
      </div>
      <span className="flex items-center pr-5 pl-3.5">100%</span>
    </footer>
  );
}

export default function App() {
  return (
    <div
      lang="ja"
      className="flex h-screen flex-col overflow-hidden border border-t-0 border-[#107c41] bg-[#efefef] font-['Noto_Sans','Noto_Sans_CJK_JP',sans-serif] text-xs text-[#262626] [font-feature-settings:'palt']"
    >
      <TitleBar />
      <TabRow />
      <Ribbon />
      <FormulaBar />
      <main className="mt-[7px] flex flex-1 overflow-hidden font-['Noto_Sans_CJK_JP',sans-serif] [font-feature-settings:normal]">
        <Sheet />
        <VerticalScroll />
      </main>
      <SheetTabs />
      <StatusBar />
    </div>
  );
}
